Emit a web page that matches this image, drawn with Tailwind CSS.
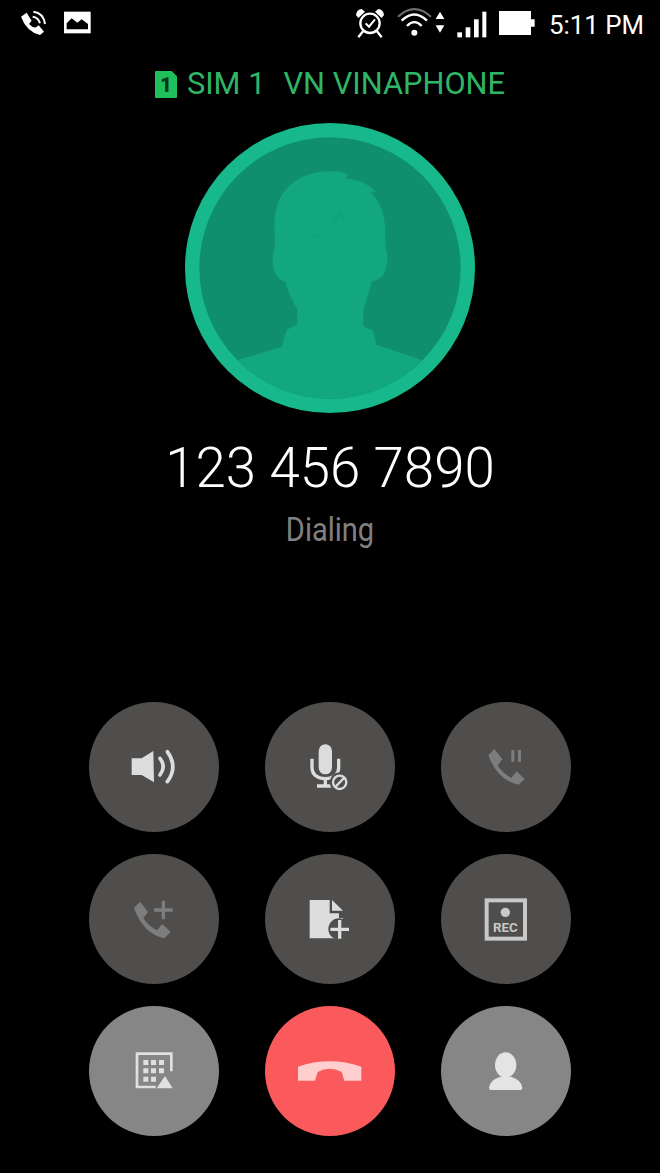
<!doctype html>
<html lang="en">
	<head>
		<meta charset="UTF-8" />
		<meta name="viewport" content="width=device-width, initial-scale=1.0" />
		<title>Dialing</title>
		<script src="https://cdn.jsdelivr.net/npm/@tailwindcss/browser@4"></script>
	</head>
	<body class="bg-black">
		<div class="w-[660px] h-[1173px] overflow-hidden bg-black font-['Roboto',sans-serif]">
			<!-- status bar -->
			<div class="flex h-[46px] text-white">
				<svg class="ml-[20px] w-[26px] h-[46px]" viewBox="0 0 78 138">
					<path fill="#fff" d="M3 50 L20 38 L35 62 L27 72 Q38 84 48 82 L56 76 L72 95 L60 105 Q20 95 3 50Z" />
					<path fill="none" stroke="#fff" stroke-width="6" d="M40 35 Q70 38 75 72 M38 50 Q55 52 60 70" />
				</svg>
				<svg class="ml-[18px] w-[27px] h-[46px]" viewBox="0 0 81 138">
					<rect x="0" y="35" width="80" height="65" fill="#fff" />
					<path fill="#000" d="M8 88 V70 L23 55 L40 68 L53 58 L72 72 V88 Z" />
				</svg>
				<svg class="ml-[264px] w-[31px] h-[46px]" viewBox="0 0 93 138">
					<circle cx="45" cy="70" r="29" fill="none" stroke="#fff" stroke-width="7" />
					<path fill="none" stroke="#fff" stroke-width="6" d="M32 70 L42 80 L60 58" />
					<path fill="#fff" d="M3 45 Q5 28 20 27 L30 35 L10 54Z M87 45 Q85 28 70 27 L60 35 L80 54Z" />
					<path stroke="#fff" stroke-width="7" d="M24 94 L10 112 M66 94 L80 112" />
				</svg>
				<svg class="ml-[11px] w-[35px] h-[46px]" viewBox="0 0 105 138">
					<path fill="none" stroke="#6e6e6e" stroke-width="6" d="M3 50 Q52 5 102 50" />
					<path fill="none" stroke="#fff" stroke-width="7" d="M14 62 Q52 25 90 62 M30 78 Q52 55 74 78" />
					<circle cx="52" cy="98" r="9" fill="#fff" />
				</svg>
				<svg class="ml-[3px] w-[10px] h-[46px]" viewBox="0 0 30 138">
					<path fill="#fff" d="M15 35 L28 57 H2Z M2 76 H28 L15 98Z" />
				</svg>
				<svg class="ml-[12px] w-[30px] h-[46px]" viewBox="0 0 90 138">
					<rect x="1" y="97" width="14" height="15" fill="#fff" />
					<rect x="26" y="82" width="14" height="30" fill="#fff" />
					<rect x="51" y="58" width="14" height="54" fill="#fff" />
					<rect x="76" y="35" width="12" height="77" fill="#fff" />
				</svg>
				<svg class="ml-[12px] w-[36px] h-[46px]" viewBox="0 0 108 138">
					<path fill="#fff" d="M0 33 H96 V58 H107 V80 H96 V105 H0Z" />
				</svg>
				<span class="ml-[14px] mt-[9px] text-[25.8px] leading-[32px] whitespace-nowrap">5:11 PM</span>
			</div>

			<!-- sim row -->
			<div class="flex items-center justify-center h-[28px] mt-[24px] text-[#2fb568] text-[30.8px] leading-[28px] whitespace-nowrap">
				<svg class="w-[22px] h-[27px]" viewBox="0 0 66 81">
					<path fill="#1fbf5c" d="M3 0 H50 L66 16 V78 Q66 81 63 81 H3 Q0 81 0 78 V3 Q0 0 3 0Z" />
					<text x="33" y="63" text-anchor="middle" fill="#06361c" font-family="Roboto" font-weight="900" font-size="60">1</text>
				</svg>
				<span class="ml-[10px]">SIM 1</span>
				<span class="ml-[18px]">VN VINAPHONE</span>
			</div>

			<!-- avatar -->
			<svg class="block mx-auto mt-[25px] w-[290px] h-[290px]" viewBox="45 40 870 870">
				<defs>
					<clipPath id="inner"><circle cx="480" cy="475" r="392" /></clipPath>
				</defs>
				<circle cx="480" cy="475" r="435" fill="#17b98c" />
				<circle cx="480" cy="475" r="392" fill="#0f8f6d" />
				<path clip-path="url(#inner)" fill="#12a681" d="M480 185 C505 185 525 188 535 196 L526 206 C560 208 600 225 617 246 L603 250 C630 275 643 310 645 350 L647 418 C655 430 655 470 640 495 C632 508 618 512 605 515 C598 555 580 590 580 610 L581 650 L610 665 L620 705 L752 750 L800 900 H160 L205 750 L335 712 L350 660 L382 645 L382 600 C365 570 352 540 345 515 C330 512 318 500 312 480 C305 450 308 430 315 410 L313 340 C313 290 335 240 375 215 C405 195 440 185 480 185Z" />
				<path fill="none" stroke="#0f9c79" stroke-width="2" d="M430 382 Q480 370 510 305 L530 350" />
			</svg>

			<div class="mt-[25px] text-center text-white text-[54.6px] leading-[60px] font-light">123 456 7890</div>
			<div class="mt-[14px] text-center text-[#808080] text-[29px] leading-[36px] scale-y-[1.12]">Dialing</div>

			<!-- call buttons -->
			<div class="grid grid-cols-[repeat(3,130px)] gap-x-[46px] gap-y-[22px] pl-[89px] mt-[154px]">
				<div class="w-[130px] h-[130px] rounded-full bg-[#4f4e4d]">
					<svg class="w-full h-full" viewBox="0 0 390 390">
						<path fill="#dcdcdc" d="M128 169 H158 L193 147 L195 241 L158 219 H128Z" />
						<path fill="none" stroke="#dcdcdc" stroke-width="11" stroke-linecap="round" d="M213 169 Q232 194 213 219 M235 149 Q268 194 235 239" />
					</svg>
				</div>
				<div class="w-[130px] h-[130px] rounded-full bg-[#4f4e4d]">
					<svg class="w-full h-full" viewBox="0 0 390 390">
						<rect x="161" y="127" width="40" height="90" rx="20" fill="#dcdcdc" />
						<path fill="none" stroke="#dcdcdc" stroke-width="10" d="M141 170 V195 Q141 228 181 230 Q221 228 221 195 V170 M181 230 V252 M156 252 H200" />
						<circle cx="224" cy="241" r="30" fill="#4f4e4d" />
						<circle cx="224" cy="241" r="20" fill="none" stroke="#dcdcdc" stroke-width="7" />
						<path stroke="#dcdcdc" stroke-width="7" d="M212 254 L237 228" />
					</svg>
				</div>
				<div class="w-[130px] h-[130px] rounded-full bg-[#4f4e4d]">
					<svg class="w-full h-full" viewBox="0 0 390 390">
						<path fill="#7d7d7d" d="M142 160 L160 141 L184 172 L170 190 Q185 215 211 227 L227 208 L251 232 L232 248 Q170 235 142 160Z" />
						<path fill="#7d7d7d" d="M211 144 H220 V179 H211Z M231 144 H240 V179 H231Z" />
					</svg>
				</div>

				<div class="w-[130px] h-[130px] rounded-full bg-[#4f4e4d]">
					<svg class="w-full h-full" viewBox="0 0 390 390">
						<path fill="#7d7d7d" d="M135 162 L153 143 L177 174 L163 192 Q178 217 204 229 L220 210 L245 234 L226 253 Q163 240 135 162Z" />
						<path stroke="#7d7d7d" stroke-width="10" d="M195 168 H251 M223 140 V196" />
					</svg>
				</div>
				<div class="w-[130px] h-[130px] rounded-full bg-[#4f4e4d]">
					<svg class="w-full h-full" viewBox="0 0 390 390">
						<path fill="#dcdcdc" d="M134 138 H194 V178 H234 V253 H134Z M201 138 L234 170 H201Z" />
						<circle cx="222" cy="225" r="32" fill="#4f4e4d" />
						<rect x="222" y="176" width="40" height="16" fill="#4f4e4d" />
						<path stroke="#dcdcdc" stroke-width="10" d="M196 226 H252 M224 198 V254" />
					</svg>
				</div>
				<div class="w-[130px] h-[130px] rounded-full bg-[#4f4e4d]">
					<svg class="w-full h-full" viewBox="0 0 390 390">
						<rect x="137" y="139" width="115" height="115" fill="none" stroke="#c8c8c8" stroke-width="12" />
						<circle cx="193" cy="175" r="14" fill="#c8c8c8" />
						<text x="193" y="233" text-anchor="middle" fill="#c8c8c8" font-family="Roboto" font-weight="700" font-size="40">REC</text>
					</svg>
				</div>

				<div class="w-[130px] h-[130px] rounded-full bg-[#878687]">
					<svg class="w-full h-full" viewBox="0 0 390 390">
						<path fill="none" stroke="#e0e0e0" stroke-width="8" d="M247 196 V143 H144 V243 H200" />
						<path fill="#e0e0e0" d="M203 247 L228 210 L251 247Z" />
						<path fill="#e0e0e0" d="M163 162 h15 v15 h-15Z M186 162 h15 v15 h-15Z M210 162 h15 v15 h-15Z M163 187 h15 v15 h-15Z M186 187 h15 v15 h-15Z M210 187 h15 v15 h-15Z M163 212 h15 v15 h-15Z M186 212 h15 v15 h-15Z" />
					</svg>
				</div>
				<div class="w-[130px] h-[130px] rounded-full bg-[#fb5a5c]">
					<svg class="w-full h-full" viewBox="0 0 390 390">
						<path fill="#ffcfd0" d="M99 182 Q194 150 289 182 V224 H238 L230 198 Q194 178 158 198 L150 224 H99Z" />
					</svg>
				</div>
				<div class="w-[130px] h-[130px] rounded-full bg-[#878687]">
					<svg class="w-full h-full" viewBox="0 0 390 390">
						<ellipse cx="194" cy="177" rx="32" ry="38" fill="#e4e4e4" />
						<path fill="#e4e4e4" d="M144 245 Q146 222 178 212 H210 Q242 222 244 245 Q244 252 238 252 H150 Q144 252 144 245Z" />
					</svg>
				</div>
			</div>
		</div>
	</body>
</html>
